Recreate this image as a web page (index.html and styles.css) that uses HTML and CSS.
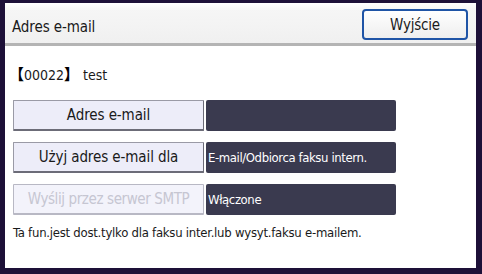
FILE: index.html
```html
<!DOCTYPE html>
<html lang="pl">
<head>
<meta charset="utf-8">
<title>Adres e-mail</title>
<link rel="stylesheet" href="styles.css">
</head>
<body>
<div class="frame">
  <div class="panel">
    <div class="header">
      <div class="title">Adres e-mail</div>
      <button class="exit">Wyjście</button>
    </div>
    <div class="content">
      <div class="entry"><span class="br">【</span>00022<span class="br">】</span> test</div>
      <div class="row">
        <button class="key">Adres e-mail</button>
        <div class="value"></div>
      </div>
      <div class="row">
        <button class="key">Użyj adres e-mail dla</button>
        <div class="value">E-mail/Odbiorca faksu intern.</div>
      </div>
      <div class="row">
        <button class="key disabled">Wyślij przez serwer SMTP</button>
        <div class="value">Włączone</div>
      </div>
      <div class="note">Ta fun.jest dost.tylko dla faksu inter.lub wysyt.faksu e-mailem.</div>
    </div>
  </div>
</div>
</body>
</html>
```

FILE: styles.css
```css
html, body {
  margin: 0;
  padding: 0;
  width: 482px;
  height: 274px;
  overflow: hidden;
  background: #1d1038;
}
body {
  font-family: "DejaVu Sans Condensed", "DejaVu Sans", sans-serif;
  color: #1a1a1a;
}
.frame {
  box-sizing: border-box;
  width: 482px;
  height: 274px;
  padding: 3px 6px 6px 5px;
}
.panel {
  background: #ffffff;
  height: 100%;
  display: flex;
  flex-direction: column;
}
.header {
  height: 40px;
  background: linear-gradient(#ffffff 0, #f6f6f6 6px, #f0f0f0 100%);
  border-bottom: 3px solid #b4b4b4;
  display: flex;
  align-items: flex-start;
  justify-content: space-between;
  padding: 0 8px 0 7px;
}
.title {
  font-size: 15px;
  line-height: 16px;
  margin-top: 16px;
  letter-spacing: -0.1px;
}
.exit {
  margin-top: 6px;
  width: 106px;
  height: 31px;
  border: 2px solid #1f54a6;
  border-radius: 4px;
  background: linear-gradient(#ffffff, #eeeeee);
  font-family: inherit;
  font-size: 15px;
  color: #1a1a1a;
  padding: 0;
  letter-spacing: -0.2px;
}
.content {
  padding: 0 0 0 8px;
  display: flex;
  flex-direction: column;
}
.entry {
  font-size: 14px;
  line-height: 16px;
  margin-top: 20px;
  height: 16px;
  white-space: nowrap;
}
.br {
  font-family: "Noto Sans CJK JP", sans-serif;
  font-size: 15px;
  font-weight: 700;
  color: #000;
  line-height: 16px;
}
.br:first-child { margin-left: -4px; }
.row {
  display: flex;
  gap: 2px;
  height: 31px;
}
.entry + .row { margin-top: 18px; }
.row + .row { margin-top: 11px; }
.key {
  box-sizing: border-box;
  width: 191px;
  height: 31px;
  margin: 0;
  padding: 0;
  background: #ededf9;
  border: 1px solid #9a9aa6;
  border-right-color: #6c6c78;
  border-bottom: 2px solid #6c6c78;
  border-radius: 1px;
  font-family: inherit;
  font-size: 15px;
  color: #1a1a1a;
  letter-spacing: -0.1px;
}
.key.disabled {
  background: #f3f3fb;
  color: #c6c6d2;
  border-color: #b8b8c4;
  letter-spacing: -0.4px;
}
.value {
  box-sizing: border-box;
  width: 190px;
  height: 31px;
  background: #3a3a4f;
  border-radius: 2px;
  color: #ffffff;
  font-size: 13px;
  line-height: 31px;
  padding-left: 2px;
  letter-spacing: -0.4px;
  white-space: nowrap;
}
.note {
  font-size: 13px;
  line-height: 16px;
  margin-top: 10px;
  letter-spacing: -0.25px;
  white-space: nowrap;
}
```
